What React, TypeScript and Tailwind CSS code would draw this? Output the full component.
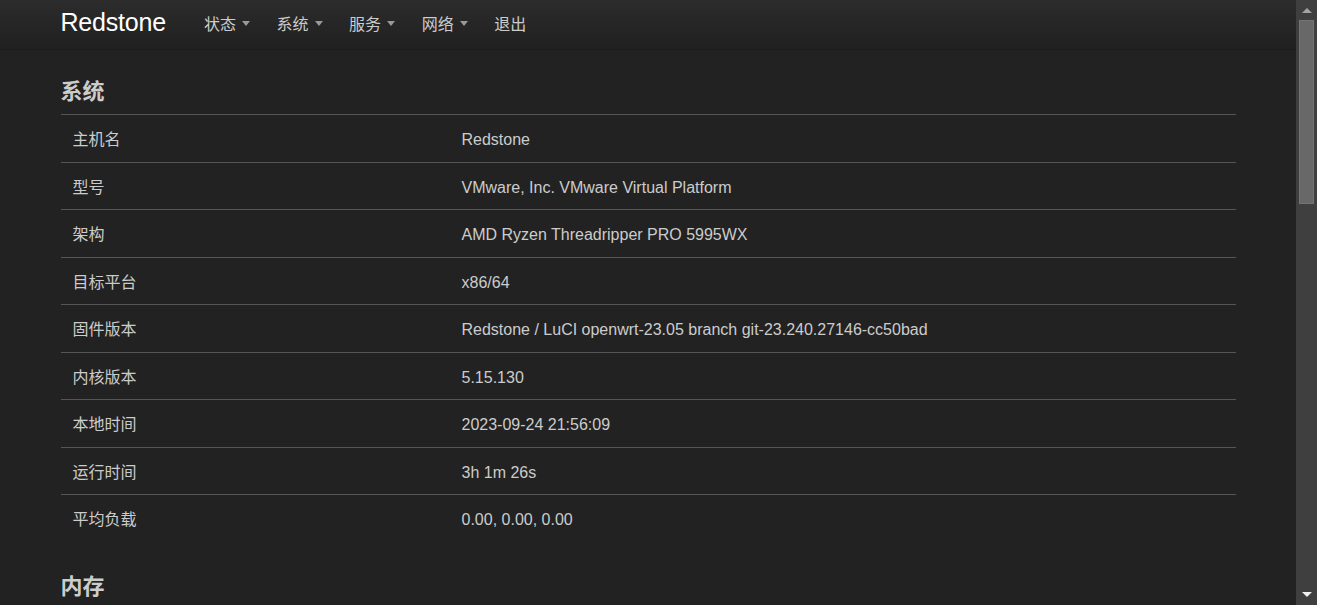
import React from "react";

const rows: [string, string][] = [
  ["主机名", "Redstone"],
  ["型号", "VMware, Inc. VMware Virtual Platform"],
  ["架构", "AMD Ryzen Threadripper PRO 5995WX"],
  ["目标平台", "x86/64"],
  ["固件版本", "Redstone / LuCI openwrt-23.05 branch git-23.240.27146-cc50bad"],
  ["内核版本", "5.15.130"],
  ["本地时间", "2023-09-24 21:56:09"],
  ["运行时间", "3h 1m 26s"],
  ["平均负载", "0.00, 0.00, 0.00"],
];

const memRows: [string, string][] = [
  ["总可用", "3.64 GiB / 3.83 GiB (95%)"],
  ["已使用", "152.39 MiB / 3.83 GiB (3%)"],
];

const Caret = () => (
  <span className="inline-block ml-[6px] w-0 h-0 border-l-[4.5px] border-r-[4.5px] border-t-[5px] border-l-transparent border-r-transparent border-t-[#999] translate-y-[-1px]" />
);

function Table({ data }: { data: [string, string][] }) {
  return (
    <div className="flex flex-col">
      {data.map(([k, v]) => (
        <div key={k} className="flex items-center h-[47.5px] pt-[4px] border-t border-[#555]">
          <div className="w-[389px] pl-3 shrink-0">{k}</div>
          <div className="pl-3 whitespace-nowrap">{v}</div>
        </div>
      ))}
    </div>
  );
}

export default function App() {
  return (
    <div
      className="h-screen flex bg-[#222] text-[#ccc] text-[16px] overflow-hidden"
      style={{ fontFamily: '"Liberation Sans", Arial, "Noto Sans CJK SC", sans-serif' }}
    >
      <div className="flex-1 min-w-0 overflow-hidden">
        <header className="h-[50px] bg-gradient-to-b from-[#2c2c2c] to-[#202020] border-b border-[#1c1c1c]">
          <div className="mx-auto w-[1175px] h-full flex items-center">
            <div className="text-[25px] text-white leading-none pb-[5px] tracking-[-0.2px]">Redstone</div>
            <nav className="flex items-center ml-[25px] text-[#ccc] text-[16px]">
              {["状态", "系统", "服务", "网络"].map((t) => (
                <span key={t} className="flex items-center px-[13px] w-[72.6px]">
                  {t}
                  <Caret />
                </span>
              ))}
              <span className="px-[13px]">退出</span>
            </nav>
          </div>
        </header>
        <main className="mx-auto w-[1175px]">
          <h2 className="text-[22px] font-bold text-[#ccc] pt-[29px] pb-[9px] leading-[26px]">系统</h2>
          <Table data={rows} />
          <h2 className="text-[22px] font-bold text-[#ccc] pt-[32px] pb-[9px] leading-[26px]">内存</h2>
          <Table data={memRows} />
        </main>
      </div>
      <div className="w-[21px] shrink-0 bg-[#3f3f3f] flex flex-col">
        <div className="h-[20px] flex items-center justify-center">
          <span className="w-0 h-0 border-l-[5px] border-r-[5px] border-b-[5px] border-l-transparent border-r-transparent border-b-[#a3a3a3]" />
        </div>
        <div className="h-[184px] mx-[3px] bg-[#686868] border border-[#747474]" />
        <div className="flex-1" />
        <div className="h-[20px] flex items-center justify-center pb-[2px]">
          <span className="w-0 h-0 border-l-[5px] border-r-[5px] border-t-[5px] border-l-transparent border-r-transparent border-t-[#f0f0f0]" />
        </div>
      </div>
    </div>
  );
}
